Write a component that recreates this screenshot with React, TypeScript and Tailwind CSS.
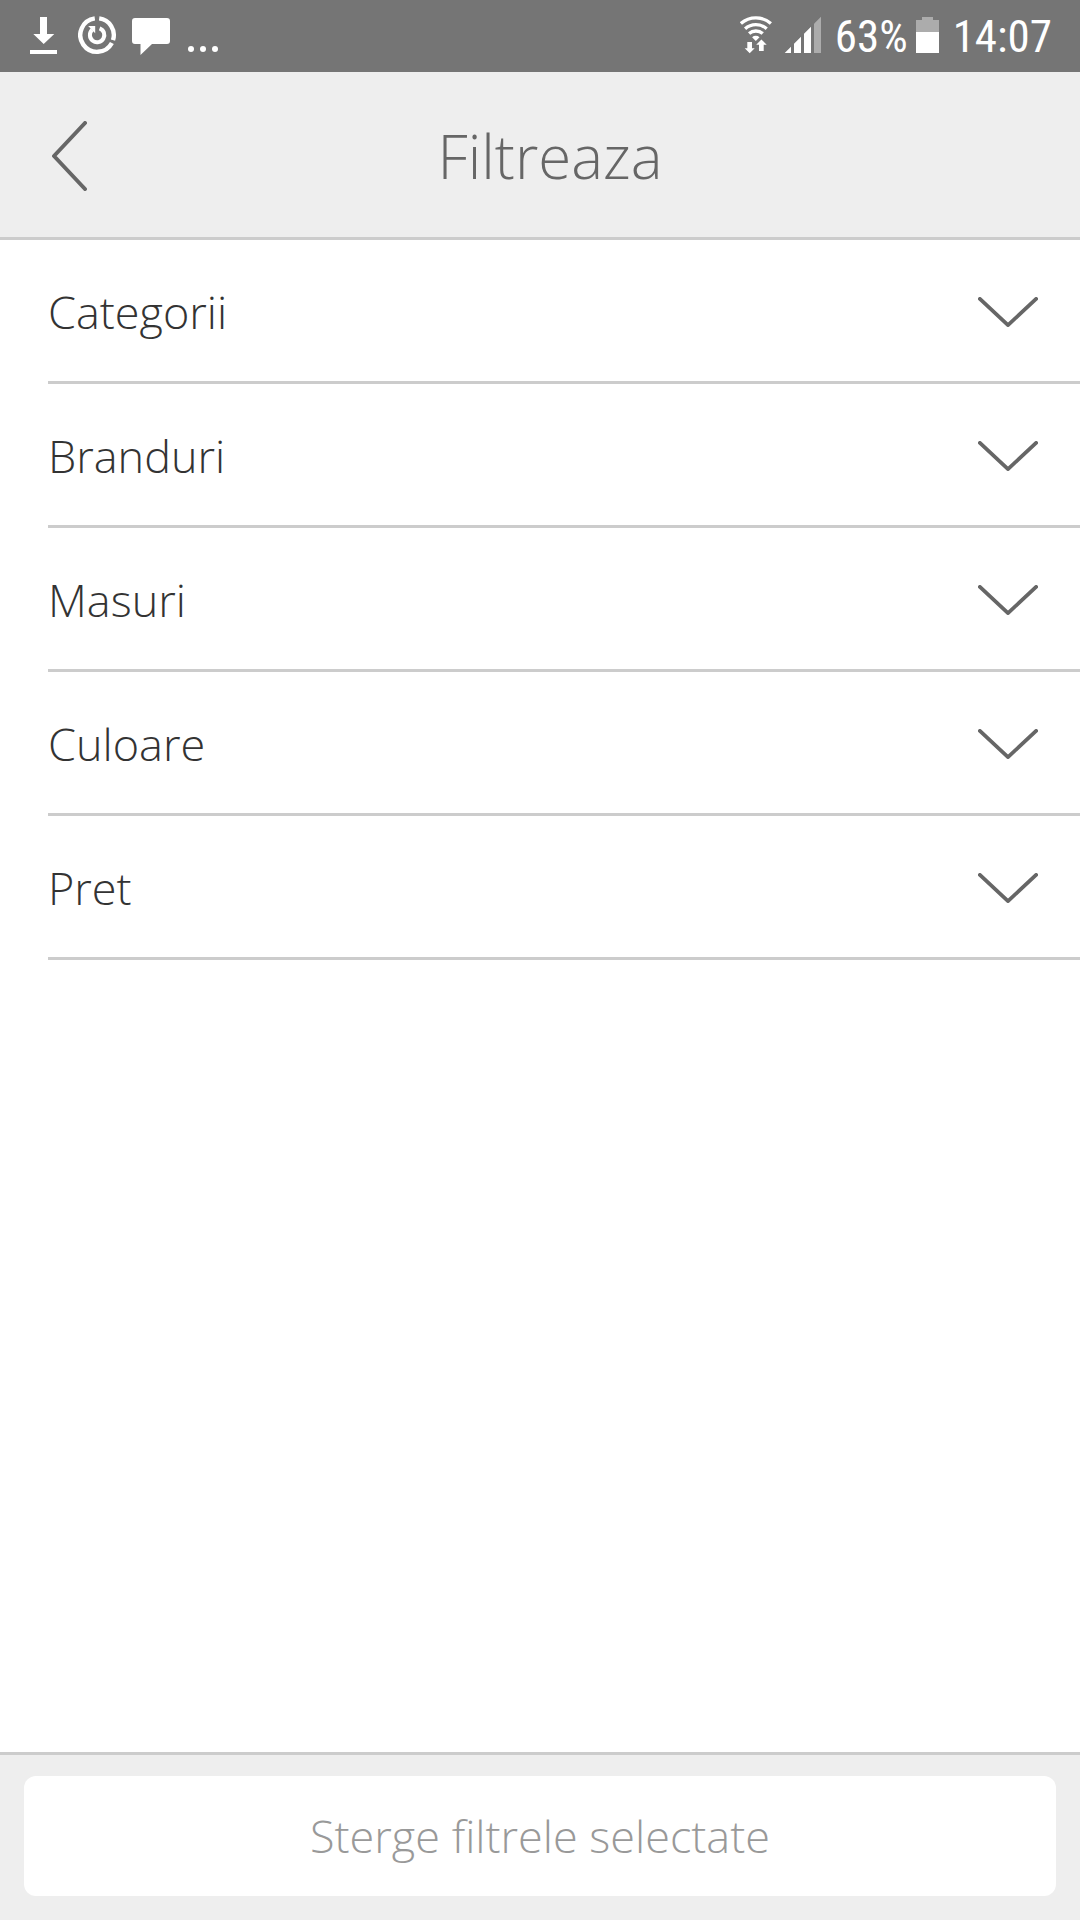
import React from "react";

const filters = ["Categorii", "Branduri", "Masuri", "Culoare", "Pret"];

const StatusBar: React.FC = () => {
  return (
    <div className="flex h-18 items-center justify-between bg-[#757575] pr-7 pl-6 text-white">
      <div className="flex items-center gap-3.5">
        <svg width="40" height="40" viewBox="0 0 40 40" fill="currentColor">
          <path d="M16 1h7v17h7.3L19.7 28 9.3 18H16zM6 34h27v4H6z" />
        </svg>
        <svg width="40" height="40" viewBox="0 0 40 40" fill="none" stroke="currentColor">
          <path
            d="M21.2 2.4A16.8 16.8 0 0 1 35 24.2M33.9 27A16.8 16.8 0 1 1 16.8 2.4"
            strokeWidth="4.4"
          />
          <path d="M21.6 12.3A7.2 7.2 0 1 1 14.2 13.8" strokeWidth="4" />
          <path d="M10.2 10h7v7.2z" fill="currentColor" stroke="none" />
        </svg>
        <svg width="40" height="40" viewBox="0 0 40 40" fill="currentColor">
          <path d="M3 2h32a3 3 0 0 1 3 3v20a3 3 0 0 1-3 3H20L8.5 39V28H3a3 3 0 0 1-3-3V5a3 3 0 0 1 3-3z" />
        </svg>
        <svg width="40" height="40" viewBox="0 0 40 40" fill="currentColor">
          <circle cx="5" cy="33" r="3" />
          <circle cx="17" cy="33" r="3" />
          <circle cx="29" cy="33" r="3" />
        </svg>
      </div>

      <div className="flex items-center gap-[13px] font-['Roboto_Condensed',Roboto,sans-serif] text-[45px] leading-none font-normal">
        <div className="flex items-center gap-3">
          <svg width="32" height="40" viewBox="0 0 32 40" fill="none" stroke="currentColor">
            <path
              d="M.9 7.5a22.7 22.7 0 0 1 30 0M5.1 12.8a16 16 0 0 1 21.6 0M9.1 17.6a10.2 10.2 0 0 1 13.6 0"
              strokeWidth="3.3"
            />
            <path
              d="M12.1 21.2a5.4 5.4 0 0 1 7.4 0l-3.7 3.8zM7.3 26H12v6.3h2.7l-5 5-5-5h2.6zM21.4 23.5l5.3 5.3h-3V35H19v-6.2h-2.8z"
              fill="currentColor"
              stroke="none"
            />
          </svg>
          <svg width="38" height="40" viewBox="0 0 38 40" fill="currentColor">
            <path d="M.7 37L7 30.7V37zM10 37v-9.3l7-7V37zM20 37V17.7l7-7V37z" />
            <path d="M30 37V7.7l7-7V37z" opacity="0.4" />
          </svg>
        </div>
        <div className="flex items-center gap-2">
          <span>63%</span>
          <svg width="24" height="40" viewBox="0 0 24 40" fill="currentColor">
            <path d="M0 4h6V1h11v3h6v12H0z" opacity="0.4" />
            <path d="M0 16h23v21H0z" />
          </svg>
        </div>
        <span>14:07</span>
      </div>
    </div>
  );
};

interface FilterRowProps {
  label: string;
}

const FilterRow: React.FC<FilterRowProps> = ({ label }) => {
  return (
    <li className="shadow-[inset_0_-3px_0_#cccccc]">
      <button
        type="button"
        aria-expanded={false}
        className="flex h-36 w-full items-center justify-between pr-[42px] text-left text-[#333333]"
      >
        {label}
        <svg
          width="60"
          height="30"
          viewBox="0 0 60 30"
          fill="none"
          stroke="#666666"
          strokeWidth="3.8"
          strokeLinecap="round"
          strokeLinejoin="round"
        >
          <path d="M1.9 1.9L30 28.1 58.1 1.9" />
        </svg>
      </button>
    </li>
  );
};

const App: React.FC = () => {
  return (
    <div className="flex min-h-screen flex-col bg-white font-['Open_Sans',sans-serif] text-[45px] leading-[44px] font-light">
      <StatusBar />

      <header className="flex h-42 items-center bg-[#eeeeee] text-[#666666] shadow-[inset_0_-3px_0_#cccccc]">
        <button type="button" aria-label="Inapoi" className="w-30 pl-13">
          <svg
            width="36"
            height="70"
            viewBox="0 0 36 70"
            fill="none"
            stroke="currentColor"
            strokeWidth="4"
            strokeLinecap="round"
            strokeLinejoin="round"
          >
            <path d="M33 2L2 35l31 33" />
          </svg>
        </button>
        <h1 className="flex-1 text-center text-[60px]">Filtreaza</h1>
        <div className="w-25" />
      </header>

      <main className="flex-1 pl-12">
        <ul>
          {filters.map((label) => (
            <FilterRow key={label} label={label} />
          ))}
        </ul>
      </main>

      <footer className="bg-[#eeeeee] p-6 shadow-[inset_0_3px_0_#cccccc]">
        <button type="button" className="h-30 w-full rounded-xl bg-white text-[#999999]">
          Sterge filtrele selectate
        </button>
      </footer>
    </div>
  );
};

export default App;
